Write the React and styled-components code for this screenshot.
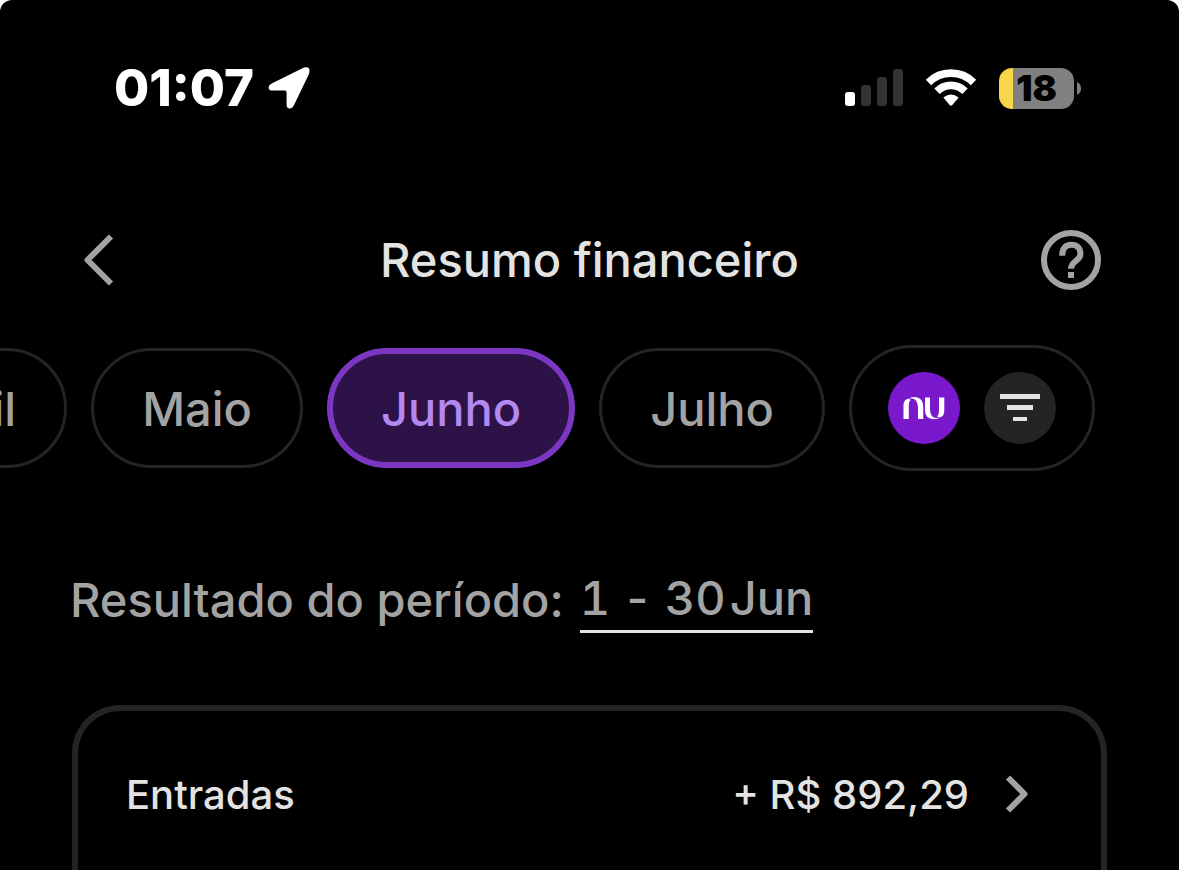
import React from "react";
import styled, { createGlobalStyle } from "styled-components";

const GlobalStyle = createGlobalStyle`
  * {
    box-sizing: border-box;
  }

  body {
    margin: 0;
    background: #ffffff;
    font-family: Inter, "Liberation Sans", sans-serif;
  }

  button {
    margin: 0;
    padding: 0;
    border: none;
    background: none;
    font: inherit;
    color: inherit;
    cursor: pointer;
  }

  svg {
    display: block;
  }
`;

const Screen = styled.div`
  min-height: 100vh;
  overflow: hidden;
  border-radius: 12px 12px 0 0;
  background: #000000;
  color: #e3e3e3;
`;

const StatusBar = styled.div`
  display: flex;
  justify-content: space-between;
  align-items: center;
  padding: 58px 98px 0 114px;
  color: #ffffff;
`;

const StatusGroup = styled.div`
  display: flex;
  align-items: center;
  gap: ${({ $gap }) => $gap}px;
`;

const Clock = styled.time`
  font-size: 51px;
  line-height: 60px;
  font-weight: 800;
`;

const Battery = styled.div`
  display: flex;
  align-items: center;
  gap: 3px;
`;

const BatteryBody = styled.div`
  width: 75px;
  height: 41px;
  border-radius: 13px;
  background: linear-gradient(to right, #f8d64a 14px, #808080 14px);
  color: #000000;
  font-size: 36px;
  line-height: 41px;
  font-weight: 900;
  text-align: center;
`;

const Header = styled.header`
  display: grid;
  grid-template-columns: 60px 1fr 60px;
  align-items: center;
  padding: 112px 78px 0;
`;

const Title = styled.h1`
  margin: 0;
  font-size: 47px;
  line-height: 60px;
  font-weight: 500;
  text-align: center;
`;

const IconButton = styled.button`
  width: 60px;
  height: 60px;
`;

const FilterRow = styled.div`
  display: flex;
  align-items: center;
  gap: 24px;
  padding: 55px 84px 0 0;
`;

const Months = styled.div`
  display: flex;
  flex: 1;
  justify-content: flex-end;
  gap: 24px;
  min-width: 0;
  overflow: hidden;
`;

const Month = styled.button`
  flex: none;
  && {
    height: 120px;
    padding: 0 48px;
    border: ${({ $active }) => ($active ? "6px solid #7c37c2" : "3px solid #242424")};
    border-radius: 60px;
    background: ${({ $active }) => ($active ? "#2d1247" : "transparent")};
    color: ${({ $active }) => ($active ? "#b388f0" : "#a3a3a3")};
    font-size: 47px;
    font-weight: 500;
  }
`;

const FilterButton = styled.button`
  && {
    display: flex;
    flex: none;
    gap: 24px;
    padding: 24px 36px;
    border: 3px solid #242424;
    border-radius: 63px;
  }
`;

const Circle = styled.span`
  display: grid;
  place-items: center;
  width: 72px;
  height: 72px;
  border-radius: 50%;
  background: ${({ $color }) => $color};
`;

const Period = styled.div`
  display: flex;
  align-items: flex-start;
  gap: 16px;
  padding: 99px 70px 0;
  color: #a3a3a3;
  font-size: 47px;
  line-height: 60px;
  font-weight: 500;
`;

const PeriodButton = styled.button`
  && {
    display: flex;
    gap: 12px;
    padding-bottom: 4px;
    border-bottom: 3px solid #e3e3e3;
    line-height: 56px;
    font-variant-numeric: tabular-nums;
  }
`;

const PeriodEnd = styled.span`
  display: flex;
  gap: 4px;
`;

const Card = styled.section`
  margin: 72px 72px 0;
  border: 6px solid #242424;
  border-bottom: none;
  border-radius: 48px 48px 0 0;
`;

const CardRow = styled.button`
  && {
    display: flex;
    align-items: center;
    width: 100%;
    padding: 54px 72px 54px 48px;
    font-size: 40px;
    line-height: 60px;
    font-weight: 500;
  }
`;

const Amount = styled.span`
  margin-left: auto;
  margin-right: 36px;
`;

const MONTHS = ["Abril", "Maio", "Junho", "Julho"];

const LocationIcon = () => (
  <svg width="42" height="42" viewBox="0 0 42 42" fill="#fff" aria-hidden="true">
    <path d="M36.500 0.500 Q42.500 -0.500 41.300 5.500 Q41 7 40 9 L25.800 38.500 Q24.200 41.800 21.500 41.600 Q18.600 41.300 18.600 37.500 V25.500 Q18.600 23.600 16.700 23.600 H4.500 Q0.800 23.600 0.600 20.700 Q0.400 18 3.700 16.400 L33 1.900 Q35 0.900 36.500 0.500Z" />
  </svg>
);

const SignalIcon = () => (
  <svg width="58" height="38" viewBox="0 0 58 38" aria-hidden="true">
    <rect x="0" y="23" width="10" height="14" rx="3" fill="#fff" />
    <rect x="16" y="16" width="10" height="21" rx="3" fill="#333" />
    <rect x="32" y="8" width="10" height="29" rx="3" fill="#333" />
    <rect x="48" y="0" width="10" height="37" rx="3" fill="#333" />
  </svg>
);

const WifiIcon = () => (
  <svg width="52" height="38" viewBox="0 0 52 38" fill="none" aria-hidden="true">
    <path d="M3.500 13.500 A31.800 31.800 0 0 1 48.500 13.500" stroke="#fff" strokeWidth="7.600" />
    <path d="M12 22.200 A19.800 19.800 0 0 1 40 22.200" stroke="#fff" strokeWidth="7.600" />
    <path d="M18.300 28.600 Q26 22.600 33.700 28.600 L27.300 36 Q26 37.600 24.700 36Z" fill="#fff" />
  </svg>
);

const BatteryTip = () => (
  <svg width="4" height="13" viewBox="0 0 4 13" aria-hidden="true">
    <path d="M0 0 Q4 2 4 6.500 Q4 11 0 13Z" fill="#808080" />
  </svg>
);

const BackIcon = () => (
  <svg width="60" height="60" viewBox="0 0 60 60" fill="none" aria-hidden="true">
    <path d="M33 6.500 L9.500 30 L33 53.500" stroke="#a3a3a3" strokeWidth="6" strokeLinejoin="round" />
  </svg>
);

const HelpIcon = () => (
  <svg width="60" height="60" viewBox="0 0 60 60" fill="none" aria-hidden="true">
    <circle cx="30" cy="30" r="27" stroke="#a3a3a3" strokeWidth="6" />
    <path d="M21.200 25.700 C21.200 18.400 24.600 14.800 30.300 14.800 C36 14.800 39.400 18.400 39.400 23.600 C39.400 31.800 30 30.500 30 38.700" stroke="#a3a3a3" strokeWidth="6" />
    <rect x="27" y="42" width="6" height="6" fill="#a3a3a3" />
  </svg>
);

const NuIcon = () => (
  <svg width="42" height="24" viewBox="0 0 42 24" fill="#fff" aria-hidden="true">
    <path d="M0.500 23 V10 Q0.500 4.500 4 3 Q6.500 2.200 7.500 4 Q5.800 5.500 5.800 9 V23Z" />
    <path d="M5 2.500 Q8 1 11.500 1 Q20.300 1.500 20.300 11 V23 H15 V11 Q14.500 2.500 8.500 2.400 Q6.500 2.300 5 2.500Z" />
    <path d="M22 1.500 H27 V14 Q27.500 21.500 33 22 Q35 22.200 36.500 21.700 Q33.500 23.400 30 23.200 Q22 22.500 22 14Z" />
    <path d="M36 1.500 H41.300 V14 Q41.300 19.500 38 21 Q35.500 22 34.200 20.400 Q36 18.600 36 15Z" />
  </svg>
);

const FilterIcon = () => (
  <svg width="40" height="28" viewBox="0 0 40 28" fill="#e3e3e3" aria-hidden="true">
    <rect x="0" y="0" width="40" height="5" />
    <rect x="7" y="11" width="26" height="5" />
    <rect x="13" y="23" width="14" height="4" />
  </svg>
);

const ForwardIcon = () => (
  <svg width="24" height="42" viewBox="0 0 24 42" fill="none" aria-hidden="true">
    <path d="M3 3.500 L19.500 20 L3 36.500" stroke="#a3a3a3" strokeWidth="6" strokeLinejoin="round" />
  </svg>
);

const App = () => (
  <>
    <GlobalStyle />
    <Screen>
      <StatusBar>
        <StatusGroup $gap={14}>
          <Clock>01:07</Clock>
          <LocationIcon />
        </StatusGroup>
        <StatusGroup $gap={22}>
          <SignalIcon />
          <WifiIcon />
          <Battery>
            <BatteryBody>18</BatteryBody>
            <BatteryTip />
          </Battery>
        </StatusGroup>
      </StatusBar>
      <Header>
        <IconButton aria-label="Voltar">
          <BackIcon />
        </IconButton>
        <Title>Resumo financeiro</Title>
        <IconButton aria-label="Ajuda">
          <HelpIcon />
        </IconButton>
      </Header>
      <FilterRow>
        <Months>
          {MONTHS.map((month) => (
            <Month key={month} $active={month === "Junho"}>
              {month}
            </Month>
          ))}
        </Months>
        <FilterButton aria-label="Filtrar">
          <Circle $color="#7a18cc">
            <NuIcon />
          </Circle>
          <Circle $color="#242424">
            <FilterIcon />
          </Circle>
        </FilterButton>
      </FilterRow>
      <Period>
        <span>Resultado do período:</span>
        <PeriodButton>
          <span>1</span>
          <span>-</span>
          <PeriodEnd>
            <span>30</span>
            <span>Jun</span>
          </PeriodEnd>
        </PeriodButton>
      </Period>
      <Card>
        <CardRow>
          <span>Entradas</span>
          <Amount>+ R$ 892,29</Amount>
          <ForwardIcon />
        </CardRow>
      </Card>
    </Screen>
  </>
);

export default App;
